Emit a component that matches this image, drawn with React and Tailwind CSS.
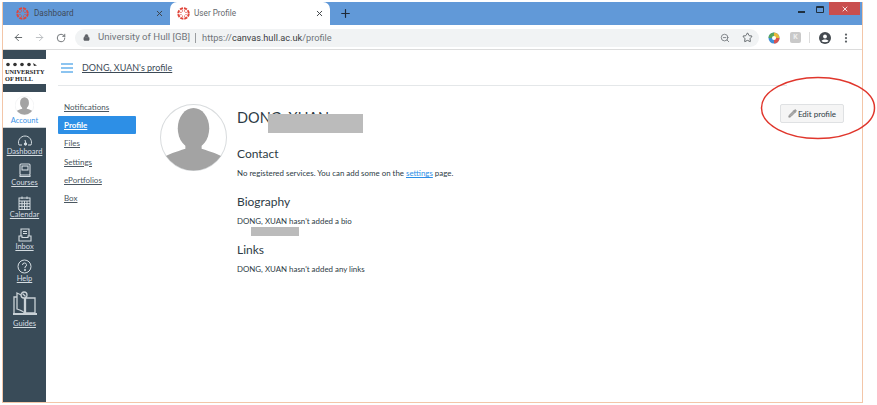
import React from 'react';
import { ArrowLeft, ArrowRight, RotateCw, Lock, X, Plus, ZoomOut, Star, EllipsisVertical, Pencil } from 'lucide-react';

const CanvasLogo = () => (
  <svg width="13" height="13" viewBox="0 0 26 26" className="shrink-0">
    <circle cx="13" cy="13" r="10.5" fill="none" stroke="#e0453a" strokeWidth="4" strokeDasharray="6.2 2" />
    {[22, 67, 112, 157, 202, 247, 292, 337].map((a) => (
      <circle
        key={a}
        cx={13 + 5.5 * Math.cos((a * Math.PI) / 180)}
        cy={13 + 5.5 * Math.sin((a * Math.PI) / 180)}
        r="1.3"
        fill="#e0453a"
      />
    ))}
  </svg>
);

const Tab = ({ title, active, className }) => (
  <div className={`flex items-center h-full pr-[6px] ${active ? 'pl-[7px] bg-white rounded-t-[7px]' : 'pl-[13px]'} ${className}`}>
    <CanvasLogo />
    <span className={`text-[8.2px] ${active ? 'ml-[4px] text-[#666a6e]' : 'ml-[5px] text-[#3f4a58]'}`}>{title}</span>
    <X className="ml-auto text-[#3c4043]" size={9} strokeWidth={2.5} />
  </div>
);

const DashIcon = () => (
  <svg width="16" height="13" viewBox="0 0 16 13" fill="none" stroke="#d5dde2" strokeWidth="1">
    <path d="M2 11 A6.5 6.5 0 1 1 14 11 L11 11" />
    <path d="M2 11 L5 11 M8 6 L9 10" />
    <circle cx="8.5" cy="10" r="1.2" fill="#d5dde2" />
  </svg>
);
const CoursesIcon = () => (
  <svg width="12" height="15" viewBox="0 0 12 15" fill="none" stroke="#d5dde2" strokeWidth="1.1">
    <rect x="1" y="1" width="10" height="11" rx="1" />
    <rect x="3" y="3" width="6" height="4" />
    <path d="M1 12 v1.5 h10 V12" />
  </svg>
);
const CalendarIcon = () => (
  <svg width="13" height="14" viewBox="0 0 13 14" fill="none" stroke="#d5dde2" strokeWidth="1">
    <rect x="1" y="2" width="11" height="11.5" />
    <path d="M1 5 h11 M1 7.7 h11 M1 10.4 h11 M4 5 v8.5 M6.5 5 v8.5 M9 5 v8.5 M4 .5 v2.5 M9 .5 v2.5" />
  </svg>
);
const InboxIcon = () => (
  <svg width="14" height="14" viewBox="0 0 14 14" fill="none" stroke="#d5dde2" strokeWidth="1.1">
    <path d="M3 8 V1 h8 v7 M5 3.5 h4 M5 5.5 h4" />
    <path d="M1 8 h3 v1.5 h6 V8 h3 v5 H1 Z" />
  </svg>
);
const HelpIcon = () => (
  <svg width="15" height="15" viewBox="0 0 15 15" fill="none" stroke="#d5dde2" strokeWidth="1">
    <circle cx="7.5" cy="7.5" r="6.5" />
    <path d="M5.5 6 A2 2 0 1 1 8 7.9 V9.2" />
    <circle cx="8" cy="11" r=".6" fill="#d5dde2" />
  </svg>
);
const GuidesIcon = () => (
  <svg width="24" height="25" viewBox="0 0 24 25" fill="none" stroke="#c9d1d6" strokeWidth="1.3">
    <path d="M1 22 V6 h3 M11.5 22 V7 C10 5 7 3 4 2 V18 C7 19 10 20 11.5 22 Z" />
    <path d="M12.5 22 V7 H22 V22 Z" />
    <path d="M0 23 H24" strokeWidth="2" />
    <circle cx="11" cy="4" r="3" fill="#394b58" />
    <path d="M9.5 2.5 L12.5 5.5" />
  </svg>
);

const SideItem = ({ icon, label, className, labelClass }) => (
  <div className={`flex flex-col items-center ${className}`}>
    <div className="flex items-end justify-center">{icon}</div>
    <span className={`text-[7.5px] leading-[10px] text-[#d5dde2] underline ${labelClass || ''}`}>{label}</span>
  </div>
);

const Avatar = ({ size }) => (
  <svg width={size} height={size} viewBox="0 0 66 66" className="shrink-0">
    <defs>
      <clipPath id={`clip${size}`}>
        <circle cx="33" cy="33" r="32.5" />
      </clipPath>
    </defs>
    <circle cx="33" cy="33" r="32.5" fill="#fff" stroke="#d9dcde" strokeWidth="1" />
    <g clipPath={`url(#clip${size})`} fill="#a3a3a3">
      <ellipse cx="33" cy="24" rx="15.5" ry="20" />
      <path d="M25 38 h16 v6 C50 47 58 49 64 54 V66 H2 V54 C8 49 16 47 25 44 Z" />
    </g>
  </svg>
);

const navItems = ['Notifications', 'Profile', 'Files', 'Settings', 'ePortfolios', 'Box'];

export default function App() {
  return (
    <div className="relative w-[877px] h-[405px] bg-white overflow-hidden font-['Lato','Noto_Sans',sans-serif]">
      <div className="ml-[2px] mt-[2px] w-[861px] h-[401px] flex flex-col border-x border-b border-[#f3c6a8]">
        {/* tab strip */}
        <div className="h-[23px] bg-[#6199d8] flex items-end shrink-0 font-['Roboto',sans-serif]">
          <Tab title="Dashboard" className="w-[167px] pb-[1px]" />
          <Tab title="User Profile" active className="w-[160px]" />
          <Plus className="ml-[9px] mb-[5px] text-[#1f2a38]" size={13} strokeWidth={2.2} />
          <div className="ml-auto flex self-start items-start h-[13px]">
            <div className="w-[7px] h-[1.5px] bg-[#20303f] mt-[9px]" />
            <div className="ml-[11px] mt-[4px] w-[8px] h-[7px] border-[1.5px] border-t-[2.5px] border-[#20303f] rounded-[1px]" />
            <div className="ml-[5px] w-[31px] h-[13px] bg-[#c94f4f] flex items-center justify-center">
              <X className="text-white" size={8} strokeWidth={2.5} />
            </div>
            <div className="w-[2px]" />
          </div>
        </div>
        {/* toolbar */}
        <div className="h-[25px] pt-[1px] bg-white border-b border-[#dcdcdc] flex items-center shrink-0 font-['Roboto',sans-serif]">
          <ArrowLeft className="ml-[10px] text-[#5a5f63]" size={11} />
          <ArrowRight className="ml-[10px] text-[#b8bbbe]" size={11} />
          <RotateCw className="ml-[11px] text-[#5a5f63]" size={10} />
          <div className="ml-[9px] w-[684px] h-[18px] bg-[#f1f3f4] rounded-full flex items-center pl-[8px] pr-[6px]">
            <Lock className="text-[#5f6368]" size={7} fill="#5f6368" />
            <span className="ml-[8px] text-[9.6px] text-[#70757a]">University of Hull [GB]</span>
            <div className="ml-[5px] w-px h-[10px] bg-[#9a9da0]" />
            <span className="ml-[6px] text-[9.2px] text-[#70757a]">
              https://<span className="text-[#3c4043]">canvas.hull.ac.uk</span>/profile
            </span>
            <ZoomOut className="ml-auto text-[#6f7478]" size={10} />
            <Star className="ml-[12px] text-[#5a5f63]" size={11} strokeWidth={2} />
          </div>
          <svg width="12" height="12" viewBox="0 0 12 12" className="ml-[9px]">
            <circle cx="6" cy="6" r="5.5" fill="#3f8fd8" />
            <path d="M6 .5 A5.5 5.5 0 0 1 11.5 6 L6 6 Z" fill="#e8b93a" />
            <path d="M.5 6 A5.5 5.5 0 0 1 6 .5 L6 6 Z" fill="#58a55c" />
            <path d="M6 6 L11.5 6 A5.5 5.5 0 0 1 6 11.5 Z" fill="#d9534f" />
            <circle cx="6" cy="6" r="2" fill="#fff" />
          </svg>
          <div className="ml-[10px] w-[11px] h-[11px] rounded-[2px] bg-[#c9c9c9] text-[#eee] text-[7px] leading-[11px] text-center font-bold">K</div>
          <div className="ml-[8px] w-px h-[11px] bg-[#dcdcdc]" />
          <svg width="12" height="12" viewBox="0 0 12 12" className="ml-[9px]">
            <circle cx="6" cy="6" r="6" fill="#444a50" />
            <circle cx="6" cy="4.5" r="1.9" fill="#fff" />
            <path d="M2.5 9 C3.5 7 8.5 7 9.5 9 C8 10.6 4 10.6 2.5 9 Z" fill="#fff" />
          </svg>
          <EllipsisVertical className="ml-[9px] text-[#5a5f63]" size={12} strokeWidth={2.5} />
        </div>
        {/* page */}
        <div className="flex flex-1 min-h-0">
          <aside className="w-[43px] bg-[#394b58] flex flex-col shrink-0">
            <div className="mt-[9px] h-[25px] bg-white flex flex-col items-center justify-center text-[#222] font-['Liberation_Serif',serif] font-bold leading-[7px] text-[6.3px]">
              <svg width="32" height="5" viewBox="0 0 32 5" fill="#333" className="mb-[1px] mr-[6px]">
                <circle cx="2" cy="2.5" r="1.8" />
                <circle cx="9" cy="2.5" r="1.8" />
                <circle cx="16" cy="2.5" r="1.8" />
                <circle cx="23" cy="2.5" r="1.8" />
                <path d="M27 1 L31 3.5 L28 4 Z" />
              </svg>
              <div className="w-full pl-[2px]">UNIVERSITY</div>
              <div className="w-full pl-[2px]">OF HULL</div>
            </div>
            <div className="mt-[8px] h-[36px] bg-white flex flex-col items-center pt-[4px] border-b border-[#ccd2d6]">
              <Avatar size={19} />
              <span className="text-[7.5px] leading-[10px] mt-[1px] text-[#3a92e8]">Account</span>
            </div>
            <SideItem icon={<DashIcon />} label="Dashboard" className="mt-[6px]" />
            <SideItem icon={<CoursesIcon />} label="Courses" className="mt-[6px]" />
            <SideItem icon={<CalendarIcon />} label="Calendar" className="mt-[8px]" />
            <SideItem icon={<InboxIcon />} label="Inbox" className="mt-[8px]" />
            <SideItem icon={<HelpIcon />} label="Help" className="mt-[7px]" />
            <SideItem icon={<GuidesIcon />} label="Guides" className="mt-[7px]" labelClass="mt-[3px]" />
          </aside>
          <main className="flex-1 min-w-0 flex flex-col pl-[12px]">
            <header className="w-[729px] h-[36px] pt-[1px] flex items-center border-b border-[#e4e7e9] shrink-0">
              <div className="ml-[3px] w-[12px] flex flex-col gap-[2px]">
                <div className="h-[2px] bg-[#8cc4f0]" />
                <div className="h-[2px] bg-[#8cc4f0]" />
                <div className="h-[2px] bg-[#8cc4f0]" />
              </div>
              <span className="ml-[9px] text-[9px] text-[#3c4a56] underline">DONG, XUAN's profile</span>
            </header>
            <div className="flex">
              <nav className="w-[78px] pt-[12px] shrink-0 flex flex-col text-[8px]">
                {navItems.map((item) => (
                  <div
                    key={item}
                    className={`h-[18.2px] flex items-center pl-[6px] rounded-[1px] ${
                      item === 'Profile' ? 'bg-[#2d8fe6] text-white font-bold' : 'text-[#4a5660]'
                    } underline`}
                  >
                    {item}
                  </div>
                ))}
              </nav>
              <div className="ml-[24px] mt-[18px]">
                <Avatar size={67} />
              </div>
              <section className="ml-[10px] mt-[22px] text-[#2d3b45] flex-1">
                <div className="flex items-start">
                  <h1 className="text-[14.5px] leading-[19px] whitespace-nowrap w-[31px]">DONG, XUAN</h1>
                  <div className="relative z-10 w-[95px] h-[19px] mt-[6px] bg-[#bbbbbb]" />
                </div>
                <h2 className="mt-[13px] text-[12px] leading-[16px]">Contact</h2>
                <p className="mt-[5px] text-[7.9px] leading-[12px]">
                  No registered services. You can add some on the{' '}
                  <span className="text-[#2d8fe6] underline">settings</span> page.
                </p>
                <h2 className="mt-[15px] text-[12px] leading-[16px]">Biography</h2>
                <p className="mt-[5px] text-[7.9px] leading-[12px]">DONG, XUAN hasn't added a bio</p>
                <div className="ml-[14px] w-[48px] h-[9px] bg-[#bbbbbb]" />
                <h2 className="mt-[6px] text-[12px] leading-[16px]">Links</h2>
                <p className="mt-[5px] text-[7.9px] leading-[12px]">DONG, XUAN hasn't added any links</p>
              </section>
              <button className="mr-[18px] mt-[18px] w-[64px] h-[19px] bg-[#f5f5f5] border border-[#dfe1e3] rounded-[2px] flex items-center justify-center text-[8px] text-[#2d3b45] shrink-0">
                <Pencil size={9} className="text-[#888] mr-[1px]" fill="#aaa" />
                Edit profile
              </button>
            </div>
          </main>
        </div>
      </div>
      {/* hand-drawn annotation over the screenshot */}
      <svg className="absolute left-[760px] top-[76px]" width="116" height="65" viewBox="0 0 116 65" fill="none">
        <ellipse cx="58" cy="32" rx="56.5" ry="30.5" stroke="#e0362c" strokeWidth="1.5" />
      </svg>
    </div>
  );
}
